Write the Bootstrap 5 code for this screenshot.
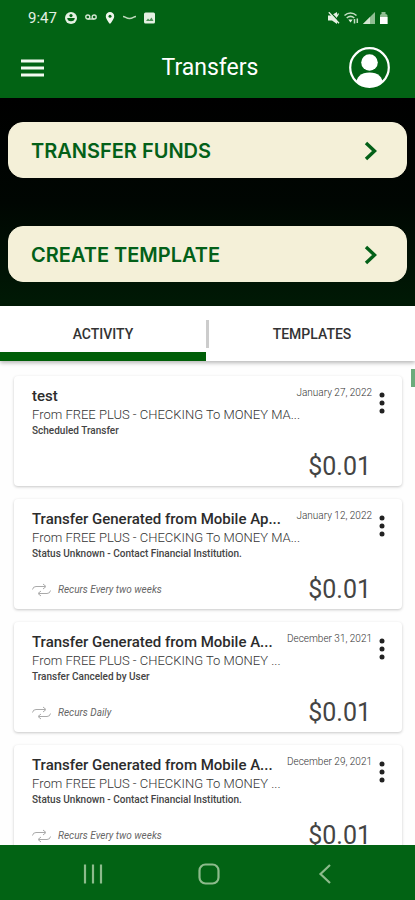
<!DOCTYPE html>
<html lang="en">
<head>
<meta charset="utf-8">
<meta name="viewport" content="width=device-width, initial-scale=1">
<title>Transfers</title>
<link href="https://cdn.jsdelivr.net/npm/bootstrap@5.3.0/dist/css/bootstrap.min.css" rel="stylesheet">
<style>
  :root { --brand: #026314; --cream: #f4f0d8; }
  body { font-family: Roboto, "Liberation Sans", sans-serif; background: #fefefe; color: #333; }
  svg { display: block; flex: none; }
  .brand-bg { background: var(--brand); }
  .status-row { height: 35px; padding: 0 26px 0 28px; font-size: 15px; line-height: 20px; color: #e4f0e2; }
  .title-row { height: 63px; padding: 3px 25px 0 20px; }
  .title-row h1 { font-size: 23px; line-height: 28px; }
  .menu-side { width: 54px; }
  .profile-side { width: 44px; }
  .actions { background: linear-gradient(#000, #000602 50%, #001a05); padding: 24px 8px; gap: 48px; }
  .action-btn { --bs-btn-color: #036018; --bs-btn-bg: var(--cream); --bs-btn-hover-bg: #ebe6c8; --bs-btn-hover-color: #036018;
    --bs-btn-border-color: var(--cream); height: 56px; border-radius: 15px; padding: 2px 28px 0 22px;
    font-family: Inter, "Liberation Sans", sans-serif; font-size: 20px; line-height: 28px; font-weight: 600; }
  .tab-row { height: 56px; box-shadow: 0 2px 4px rgba(0,0,0,.28); z-index: 1; }
  .tab-btn { border-radius: 0; color: #333; font-size: 14px; font-weight: 500; line-height: 20px; padding: 10px 0 0; border: 0; border-bottom: 9px solid transparent; }
  .tab-btn.active { border-bottom-color: #005f08; }
  .tab-divider { width: 3px; height: 28px; background: #ccc; margin: 14px 0 0; }
  .feed { padding: 15px 13px 0 14px; gap: 13px; }
  .entry { height: 110px; flex: none; border: 0; border-radius: 4px; background: #fff; padding: 10px 16px 4px 18px;
    box-shadow: 0 1px 3px rgba(0,0,0,.22); }
  .entry-main { flex: 1 1 0; min-width: 0; }
  .entry-title { font-size: 15px; line-height: 20px; font-weight: 500; color: #2c2c2c; }
  .entry-route { font-size: 13px; line-height: 18px; font-weight: 300; color: #333; }
  .entry-state { font-size: 10px; line-height: 14px; font-weight: 500; color: #444; }
  .entry-date { font-size: 10px; line-height: 14px; font-weight: 300; color: #333; margin-right: 6px; }
  .entry-recur { font-size: 10px; line-height: 14px; color: #666; gap: 7px; }
  .entry-sum { font-size: 25px; line-height: 30px; color: #444; margin-right: 15px; }
  .scroll-thumb { width: 4px; height: 18px; top: 8px; right: 0; background: #6cab7c; }
  .nav-row { height: 55px; padding: 2px 79px 0 82px; }
</style>
</head>
<body>
<div class="d-flex flex-column vh-100 overflow-hidden">
  <header class="brand-bg text-white">
    <div class="status-row d-flex align-items-center">
      <span>9:47</span>
      <div class="d-flex align-items-center ms-2 gap-2">
        <svg width="12" height="12" viewBox="0 0 12 12" aria-hidden="true"><circle cx="6" cy="6" r="6" fill="#e4f0e2"/><circle cx="6" cy="3.6" r="1.6" fill="#026314"/><path d="M2.2 6h7.6c0 2-1.7 3.3-3.8 3.3S2.200 8 2.200 6z" fill="#026314"/></svg>
        <svg width="12" height="12" viewBox="0 0 12 12" fill="none" stroke="#d4e6d2" stroke-width="1.400" aria-hidden="true"><circle cx="2.800" cy="5" r="2"/><circle cx="9.200" cy="5" r="2"/><path d="M2.800 7h6.400"/></svg>
        <svg width="10" height="12" viewBox="0 0 10 12" aria-hidden="true"><path d="M5 0a4.200 4.200 0 0 0-4.200 4.200C.8 7.300 5 12 5 12s4.200-4.700 4.200-7.800A4.200 4.200 0 0 0 5 0z" fill="#eef6ec"/><circle cx="5" cy="4.200" r="1.500" fill="#026314"/></svg>
        <svg width="13" height="12" viewBox="0 0 13 12" fill="none" stroke="#bcd8bb" stroke-width="1.500" aria-hidden="true"><path d="M0 4.500c2.500 0 3 2 6.500 2s4-2 6.500-2"/></svg>
        <svg width="11" height="12" viewBox="0 0 11 12" aria-hidden="true"><rect y=".5" width="11" height="11" rx="1.500" fill="#e4f0e2"/><path d="M2 9l2-2.500 1.500 1.500L7.500 5.500 9.500 9z" fill="#4f9159"/></svg>
      </div>
      <div class="d-flex align-items-center ms-auto gap-1">
        <svg width="12" height="12" viewBox="0 0 12 12" aria-hidden="true"><path d="M0 3.500h3l6-3.500v12L4 8.500H0z" fill="#e4f0e2"/><path d="M2.200.200l9.300 9.600" stroke="#026314" stroke-width="1.400"/><path d="M.8.200l10.200 11M9 4.500l1.500-3" stroke="#e4f0e2" stroke-width="1.300"/></svg>
        <svg width="15" height="12" viewBox="0 0 15 12" fill="none" stroke="#c4dec3" stroke-width="1.500" aria-hidden="true"><path d="M.5 3.500c3.500-3.300 8.500-3.300 12 0M2.700 6c2.300-2 5.300-2 7.600 0"/><path d="M4.300 7.500h4.400L6.500 10.500z" fill="#e4f0e2" stroke="none"/><path d="M10.500 7v4.500M13.300 6.500V11"/></svg>
        <svg width="12" height="12" viewBox="0 0 12 12" aria-hidden="true"><path d="M12 0v12H0z" fill="#8fbe92"/><path d="M7 5v7H0z" fill="#d4e6d2"/></svg>
        <svg width="10" height="12" viewBox="0 0 10 12" aria-hidden="true"><path d="M1 3.500Q1 2 2.500 2V0h4v2Q8.500 2 8.500 3.500V12H1z" fill="#8fbe92"/><path d="M1 5h7.500v7H1z" fill="#fff"/></svg>
      </div>
    </div>
    <div class="title-row d-flex align-items-center justify-content-between">
      <div class="menu-side">
        <button type="button" class="btn p-0 border-0" aria-label="Menu">
          <svg width="24" height="20" viewBox="0 0 24 20" fill="none" stroke="#f3faf1" stroke-width="3"><path d="M1 2h23M1 9h23M1 16h23"/></svg>
        </button>
      </div>
      <h1 class="m-0 fw-normal">Transfers</h1>
      <div class="profile-side d-flex justify-content-end">
        <button type="button" class="btn p-0 border-0" aria-label="Profile">
          <svg width="41" height="43" viewBox="0 0 41 43"><defs><clipPath id="face"><circle cx="20.500" cy="20.500" r="19"/></clipPath></defs><circle cx="20.500" cy="20.500" r="19.300" fill="none" stroke="#fff" stroke-width="2.200"/><g fill="#fff" clip-path="url(#face)"><circle cx="20.500" cy="15.500" r="8.300"/><path d="M7 38c0-8 5-12.500 13.500-12.500S34 30 34 38v3H7z"/></g></svg>
        </button>
      </div>
    </div>
  </header>

  <section class="actions d-flex flex-column">
    <button type="button" class="btn action-btn d-flex align-items-center justify-content-between">TRANSFER FUNDS
      <svg width="14" height="20" viewBox="0 0 14 20" fill="none" stroke="#036018" stroke-width="3.400"><path d="M2 2l8.500 8L2 18"/></svg></button>
    <button type="button" class="btn action-btn d-flex align-items-center justify-content-between">CREATE TEMPLATE
      <svg width="14" height="20" viewBox="0 0 14 20" fill="none" stroke="#036018" stroke-width="3.400"><path d="M2 2l8.500 8L2 18"/></svg></button>
  </section>

  <div class="tab-row d-flex bg-white position-relative" role="tablist">
    <button type="button" class="btn tab-btn active w-50" role="tab" aria-selected="true">ACTIVITY</button>
    <div class="tab-divider"></div>
    <button type="button" class="btn tab-btn w-50" role="tab" aria-selected="false">TEMPLATES</button>
  </div>

  <main class="feed d-flex flex-column flex-fill overflow-hidden position-relative">
    <div class="scroll-thumb position-absolute"></div>
    <article class="card entry">
      <div class="d-flex text-nowrap">
        <div class="entry-main">
          <div class="entry-title">test</div>
          <div class="entry-route">From FREE PLUS - CHECKING To MONEY MA...</div>
          <div class="entry-state">Scheduled Transfer</div>
        </div>
        <time class="entry-date" datetime="2022-01-27">January 27, 2022</time>
        <button type="button" class="btn p-0 border-0 align-self-start" aria-label="More options"><svg width="8" height="34" viewBox="0 0 8 34" fill="#222"><circle cx="4" cy="9" r="2.500"/><circle cx="4" cy="17" r="2.500"/><circle cx="4" cy="25" r="2.500"/></svg></button>
      </div>
      <div class="d-flex align-items-center mt-auto">
        <div class="entry-sum ms-auto">$0.01</div>
      </div>
    </article>
    <article class="card entry">
      <div class="d-flex text-nowrap">
        <div class="entry-main">
          <div class="entry-title">Transfer Generated from Mobile Ap...</div>
          <div class="entry-route">From FREE PLUS - CHECKING To MONEY MA...</div>
          <div class="entry-state">Status Unknown - Contact Financial Institution.</div>
        </div>
        <time class="entry-date" datetime="2022-01-12">January 12, 2022</time>
        <button type="button" class="btn p-0 border-0 align-self-start" aria-label="More options"><svg width="8" height="34" viewBox="0 0 8 34" fill="#222"><circle cx="4" cy="9" r="2.500"/><circle cx="4" cy="17" r="2.500"/><circle cx="4" cy="25" r="2.500"/></svg></button>
      </div>
      <div class="d-flex align-items-center mt-auto">
        <div class="entry-recur d-flex align-items-center fst-italic"><svg width="19" height="14" viewBox="0 0 19 14" fill="none" stroke="#aaa"><path d="M.5 6.500Q1 3.500 4 3.500h9M11 1l3 2.500L11 6M18.500 7.500q-.5 3-3.500 3H7M9 8l-3 2.500L9 13"/></svg>Recurs Every two weeks</div>
        <div class="entry-sum ms-auto">$0.01</div>
      </div>
    </article>
    <article class="card entry">
      <div class="d-flex text-nowrap">
        <div class="entry-main">
          <div class="entry-title">Transfer Generated from Mobile A...</div>
          <div class="entry-route">From FREE PLUS - CHECKING To MONEY ...</div>
          <div class="entry-state">Transfer Canceled by User</div>
        </div>
        <time class="entry-date" datetime="2021-12-31">December 31, 2021</time>
        <button type="button" class="btn p-0 border-0 align-self-start" aria-label="More options"><svg width="8" height="34" viewBox="0 0 8 34" fill="#222"><circle cx="4" cy="9" r="2.500"/><circle cx="4" cy="17" r="2.500"/><circle cx="4" cy="25" r="2.500"/></svg></button>
      </div>
      <div class="d-flex align-items-center mt-auto">
        <div class="entry-recur d-flex align-items-center fst-italic"><svg width="19" height="14" viewBox="0 0 19 14" fill="none" stroke="#aaa"><path d="M.5 6.500Q1 3.500 4 3.500h9M11 1l3 2.500L11 6M18.500 7.500q-.5 3-3.500 3H7M9 8l-3 2.500L9 13"/></svg>Recurs Daily</div>
        <div class="entry-sum ms-auto">$0.01</div>
      </div>
    </article>
    <article class="card entry">
      <div class="d-flex text-nowrap">
        <div class="entry-main">
          <div class="entry-title">Transfer Generated from Mobile A...</div>
          <div class="entry-route">From FREE PLUS - CHECKING To MONEY ...</div>
          <div class="entry-state">Status Unknown - Contact Financial Institution.</div>
        </div>
        <time class="entry-date" datetime="2021-12-29">December 29, 2021</time>
        <button type="button" class="btn p-0 border-0 align-self-start" aria-label="More options"><svg width="8" height="34" viewBox="0 0 8 34" fill="#222"><circle cx="4" cy="9" r="2.500"/><circle cx="4" cy="17" r="2.500"/><circle cx="4" cy="25" r="2.500"/></svg></button>
      </div>
      <div class="d-flex align-items-center mt-auto">
        <div class="entry-recur d-flex align-items-center fst-italic"><svg width="19" height="14" viewBox="0 0 19 14" fill="none" stroke="#aaa"><path d="M.5 6.500Q1 3.500 4 3.500h9M11 1l3 2.500L11 6M18.500 7.500q-.5 3-3.500 3H7M9 8l-3 2.500L9 13"/></svg>Recurs Every two weeks</div>
        <div class="entry-sum ms-auto">$0.01</div>
      </div>
    </article>
  </main>

  <nav class="nav-row brand-bg d-flex align-items-center justify-content-between flex-shrink-0" aria-label="System">
    <button type="button" class="btn p-0 border-0" aria-label="Recent apps"><svg width="22" height="22" viewBox="0 0 22 22" fill="none" stroke="#8dbb8c" stroke-width="2.200"><path d="M3 1.500v19M11 1.500v19M19 1.500v19"/></svg></button>
    <button type="button" class="btn p-0 border-0" aria-label="Home"><svg width="22" height="22" viewBox="0 0 22 22" fill="none" stroke="#8dbb8c" stroke-width="2.200"><rect x="1.500" y="1.500" width="19" height="19" rx="6"/></svg></button>
    <button type="button" class="btn p-0 border-0" aria-label="Back"><svg width="22" height="22" viewBox="0 0 22 22" fill="none" stroke="#8dbb8c" stroke-width="2.200"><path d="M16 2L6.500 11 16 20"/></svg></button>
  </nav>
</div>
<script src="https://cdn.jsdelivr.net/npm/bootstrap@5.3.0/dist/js/bootstrap.bundle.min.js"></script>
</body>
</html>
